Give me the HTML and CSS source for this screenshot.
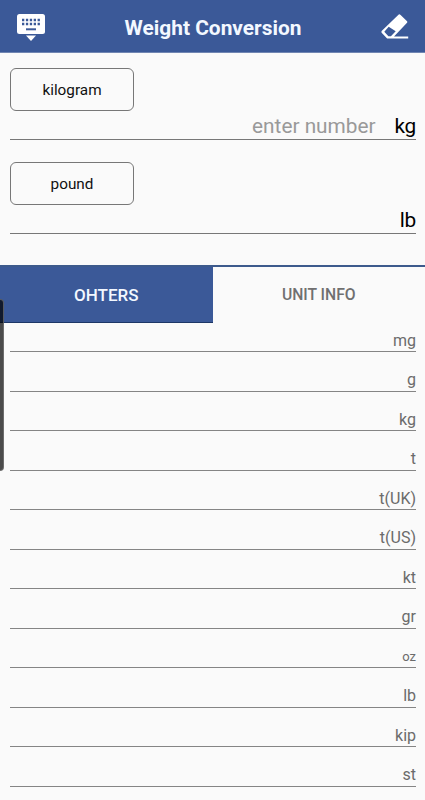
FILE: index.html
```html
<!DOCTYPE html>
<html lang="en">
<head>
<meta charset="utf-8">
<title>Weight Conversion</title>
<link rel="stylesheet" href="styles.css">
</head>
<body>
<header class="bar">
  <svg class="icon keyboard" width="28" height="28" viewBox="0 0 28 28">
    <rect x="0" y="0" width="28" height="20" rx="2.5" fill="#fff"/>
    <path d="M9 21.5h10l-5 5.5z" fill="#fff"/>
    <path d="M5 6h18M5 10h18" stroke="#3b5998" stroke-width="2.3" stroke-dasharray="2.3 1.6"/>
    <path d="M9 15.3h10" stroke="#3b5998" stroke-width="2"/>
  </svg>
  <h1 class="title">Weight Conversion</h1>
  <svg class="icon eraser" width="28" height="26" viewBox="0 0 28 26">
    <path fill="#fff" fill-rule="evenodd" d="M17.2 .9q1.2-1.1 2.4 0l6.2 6q1.1 1.1 0 2.2L13 22.5h14.2v2H6.1L.9 19.1q-1-1.2 0-2.3zM7.7 12.7l-4.4 5 4.1 4.5h2.5l4.8-5z"/>
  </svg>
</header>
<main>
  <section class="converter">
    <div class="field">
      <button class="unit">kilogram</button>
      <div class="entry"><span class="hint">enter number</span><span class="symbol">kg</span></div>
    </div>
    <div class="field">
      <button class="unit">pound</button>
      <div class="entry"><span class="symbol">lb</span></div>
    </div>
  </section>
  <nav class="tabs">
    <div class="tab active">OHTERS</div>
    <div class="tab">UNIT INFO</div>
  </nav>
  <ul class="list">
    <li>mg</li>
    <li>g</li>
    <li>kg</li>
    <li>t</li>
    <li>t(UK)</li>
    <li>t(US)</li>
    <li>kt</li>
    <li>gr</li>
    <li class="small">oz</li>
    <li>lb</li>
    <li>kip</li>
    <li>st</li>
  </ul>
</main>
<div class="edge-handle"></div>
</body>
</html>
```
FILE: styles.css
```css
* { box-sizing: border-box; }
body {
  margin: 0;
  height: 800px;
  overflow: hidden;
  position: relative;
  background: #fafafa;
  color: #111;
  font-family: Roboto, "Liberation Sans", sans-serif;
}
.bar {
  height: 53px;
  padding: 0 16px 0 17px;
  display: flex;
  align-items: center;
  justify-content: space-between;
  background: #3b5998;
  border-bottom: 1px solid #7186b2;
}
.icon { display: block; }
.keyboard { margin-top: 3px; }
.eraser { margin-top: 2px; }
.title {
  margin: 4px 0 0;
  font-size: 20.9px;
  line-height: 24px;
  font-weight: 700;
  color: #f3f8ff;
}
.converter { height: 212px; padding: 15px 9px 0 10px; }
.field { height: 94px; }
.unit {
  display: block;
  width: 124px;
  height: 43px;
  padding: 1px 0 0;
  border: 1px solid #777;
  border-radius: 6px;
  background: transparent;
  color: #111;
  font: 400 15.3px/20px Roboto, sans-serif;
}
.entry {
  height: 29px;
  display: flex;
  justify-content: flex-end;
  border-bottom: 1px solid #777;
  font-size: 20.8px;
  line-height: 30px;
}
.symbol { letter-spacing: -.3px; color: #000; }
.hint { margin-right: 19px; color: #999; }
.tabs {
  height: 58px;
  display: flex;
  border-top: 2px solid #3d5a8c;
}
.tab {
  flex: 1;
  font-size: 15.7px;
  font-weight: 500;
  line-height: 56px;
  text-align: center;
  color: #707070;
}
.tab.active {
  font-size: 17px;
  background: #3b5998;
  color: #f3f8ff;
  border-bottom: 1px solid #1d3766;
}
.list {
  margin: 0;
  padding: 0 9px 0 10px;
  list-style: none;
}
.list li {
  height: 39.5px;
  padding-top: 18px;
  border-bottom: 1px solid #858585;
  font-size: 16px;
  line-height: 19px;
  text-align: right;
  color: #6b6b6b;
}
.list li:first-child { height: 29px; padding-top: 8px; }
.list .small { font-size: 13px; }
.edge-handle {
  position: absolute;
  left: 0;
  top: 299px;
  width: 4px;
  height: 172px;
  border: 1px solid rgba(125, 125, 125, .65);
  border-left: 0;
  border-radius: 0 4px 4px 0;
  background: rgba(0, 0, 0, .7);
}
```
